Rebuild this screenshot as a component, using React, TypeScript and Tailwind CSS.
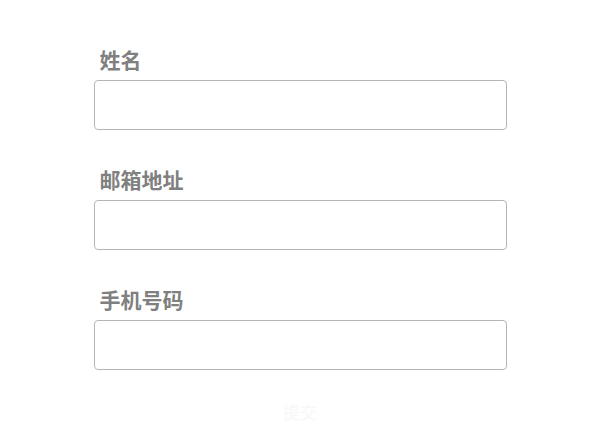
const fields = [
  { id: "name", label: "姓名", type: "text" },
  { id: "email", label: "邮箱地址", type: "email" },
  { id: "phone", label: "手机号码", type: "tel" },
];

export default function App() {
  return (
    <div className="min-h-screen bg-white font-['Noto_Sans_CJK_SC',sans-serif]">
      <form className="w-[413px] mx-auto pt-[45px] flex flex-col gap-[35px]">
        {fields.map((f) => (
          <div key={f.id} className="flex flex-col gap-[6px]">
            <label htmlFor={f.id} className="pl-[6px] text-[21px] leading-[29px] font-bold text-[#808080]">
              {f.label}
            </label>
            <input
              id={f.id}
              type={f.type}
              className="h-[50px] w-full rounded-[4px] border border-[#b5b5b5] bg-white px-3 outline-none"
            />
          </div>
        ))}
        <div className="flex justify-center -mt-[5px]">
          <button type="button" className="text-[17px] leading-6 text-[#f7f7f7]">提交</button>
        </div>
      </form>
    </div>
  );
}
